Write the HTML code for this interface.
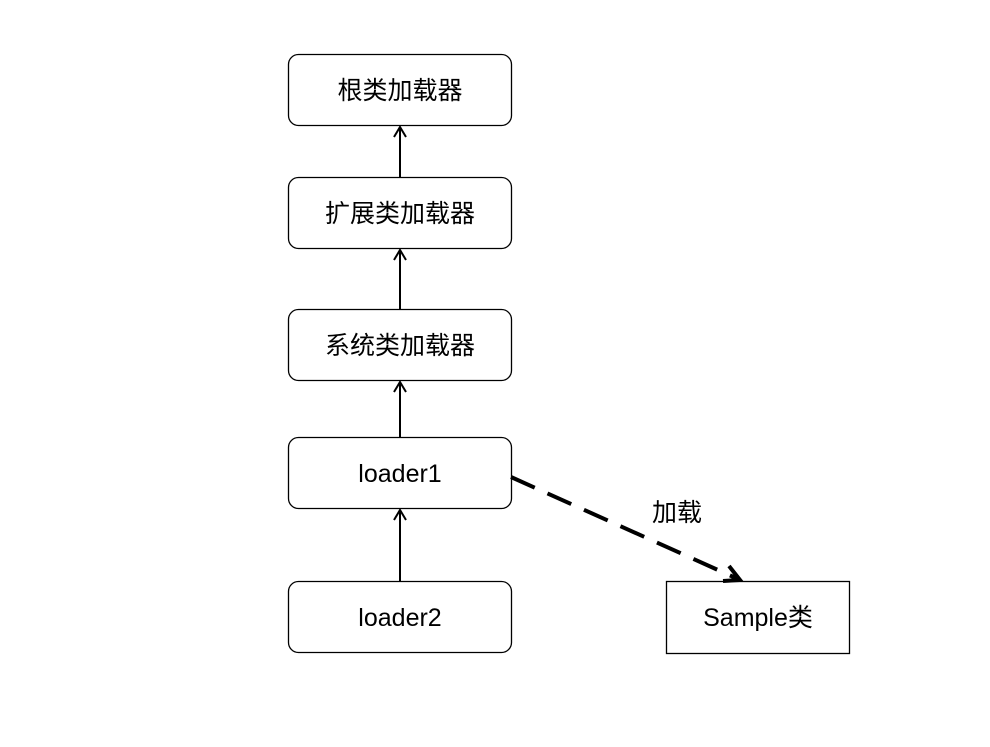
<!DOCTYPE html>
<html><head><meta charset="utf-8"><style>
html,body{margin:0;padding:0;background:#fff;width:990px;height:747px;overflow:hidden}
text{font-family:"Liberation Sans","Noto Sans CJK SC",sans-serif;font-size:25px;fill:#000}
</style></head><body>
<svg width="990" height="747" viewBox="0 0 990 747" xmlns="http://www.w3.org/2000/svg">
<g fill="#fff" stroke="#000" stroke-width="1.3">
<rect x="288.5" y="54.5" width="223" height="71" rx="10"/>
<rect x="288.5" y="177.5" width="223" height="71" rx="10"/>
<rect x="288.5" y="309.5" width="223" height="71" rx="10"/>
<rect x="288.5" y="437.5" width="223" height="71" rx="10"/>
<rect x="288.5" y="581.5" width="223" height="71" rx="10"/>
<rect x="666.5" y="581.5" width="183" height="72"/>
</g>
<g stroke="#000" stroke-width="2" fill="none">
<line x1="400" y1="177" x2="400" y2="127"/><polyline points="394,137 400,127 406,137"/>
<line x1="400" y1="309" x2="400" y2="250"/><polyline points="394,260 400,250 406,260"/>
<line x1="400" y1="437" x2="400" y2="382"/><polyline points="394,392 400,382 406,392"/>
<line x1="400" y1="581" x2="400" y2="510"/><polyline points="394,520 400,510 406,520"/>
</g>
<g stroke="#000" stroke-width="4" fill="none">
<line x1="511" y1="477" x2="738" y2="579" stroke-dasharray="26,14"/>
<polyline points="729,566 740,580 723,581"/>
</g>
<g text-anchor="middle">
<text x="400" y="99">根类加载器</text>
<text x="400" y="222">扩展类加载器</text>
<text x="400" y="354">系统类加载器</text>
<text x="400" y="482">loader1</text>
<text x="400" y="626">loader2</text>
<text x="758" y="626">Sample类</text>
<text x="677" y="521">加载</text>
</g>
</svg>
</body></html>
